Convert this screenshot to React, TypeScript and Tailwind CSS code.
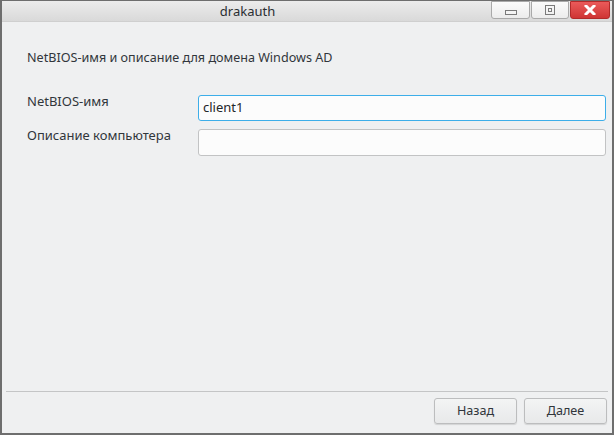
import React from "react";

export default function App() {
  const font = { fontFamily: '"Noto Sans", "Open Sans", sans-serif' };
  return (
    <div
      className="w-[614px] h-[435px] flex flex-col bg-[#eff0f1] border-x-2 border-b-2 border-t border-[#6e6e6e] text-[#31363b] text-[12.6px] overflow-hidden"
      style={font}
    >
      {/* title bar */}
      <div className="h-[21px] flex items-start bg-gradient-to-b from-[#ececec] to-[#d9d9d9] border-b border-[#cfcfcf] shrink-0">
        <div className="flex-1 h-[21px] flex items-center justify-center text-[13px] text-[#2a2e32] pl-[2px]">
          drakauth
        </div>
        <div className="flex h-[18px] mr-[2px]">
          <div className="w-[39px] h-[18px] bg-gradient-to-b from-[#fbfbfb] to-[#ececec] border border-[#a9a9a9] rounded-b-[3px] flex items-end justify-center pb-[3px]">
            <div className="w-[12px] h-[5px] border border-[#7a7a7a] bg-[#f4f4f4]" />
          </div>
          <div className="w-[38px] h-[18px] ml-[1px] bg-gradient-to-b from-[#fbfbfb] to-[#ececec] border border-[#a9a9a9] rounded-b-[3px] flex items-center justify-center">
            <div className="w-[10px] h-[10px] border border-[#7a7a7a] flex items-center justify-center">
              <div className="w-[4px] h-[4px] border border-[#7a7a7a]" />
            </div>
          </div>
          <div className="w-[40px] h-[18px] ml-[1px] bg-gradient-to-b from-[#ea5a5a] to-[#cf3434] border border-[#b22a2a] rounded-b-[3px] flex items-center justify-center">
            <svg width="12" height="10" viewBox="0 0 12 10">
              <path d="M2 1 L10 9 M10 1 L2 9" stroke="#ffffff" strokeWidth="3" strokeLinecap="square" />
            </svg>
          </div>
        </div>
      </div>

      {/* content */}
      <div className="flex-1 flex flex-col">
        <div className="pl-[25px] pt-[27px] leading-[18px]">
          NetBIOS-имя и описание для домена Windows AD
        </div>
        <div className="grid grid-cols-[171px_408px] gap-y-[8px] pl-[25px] mt-[28px] text-[13px]">
          <div className="leading-[18px] -mt-[3px]">NetBIOS-имя</div>
          <div className="h-[26px] rounded-[3px] border border-[#3daee9] bg-[#fcfcfc] flex items-center px-[4px] text-[#232629]">
            client1
          </div>
          <div className="leading-[18px] -mt-[3px]">Описание компьютера</div>
          <div className="h-[27px] rounded-[3px] border border-[#c2c3c4] bg-[#fcfcfc]" />
        </div>
        <div className="flex-1" />
        <div className="mx-[4px] border-t border-[#c4c5c6]" />
        <div className="flex justify-end gap-[7px] pr-[5px] pt-[6px] pb-[9px]">
          <div className="w-[83px] h-[26px] rounded-[3px] border border-[#bcbdbe] bg-gradient-to-b from-[#f3f4f4] to-[#e8e9ea] shadow-[0_1px_1px_rgba(0,0,0,0.12)] flex items-center justify-center">
            Назад
          </div>
          <div className="w-[83px] h-[26px] rounded-[3px] border border-[#bcbdbe] bg-gradient-to-b from-[#f3f4f4] to-[#e8e9ea] shadow-[0_1px_1px_rgba(0,0,0,0.12)] flex items-center justify-center">
            Далее
          </div>
        </div>
      </div>
    </div>
  );
}
